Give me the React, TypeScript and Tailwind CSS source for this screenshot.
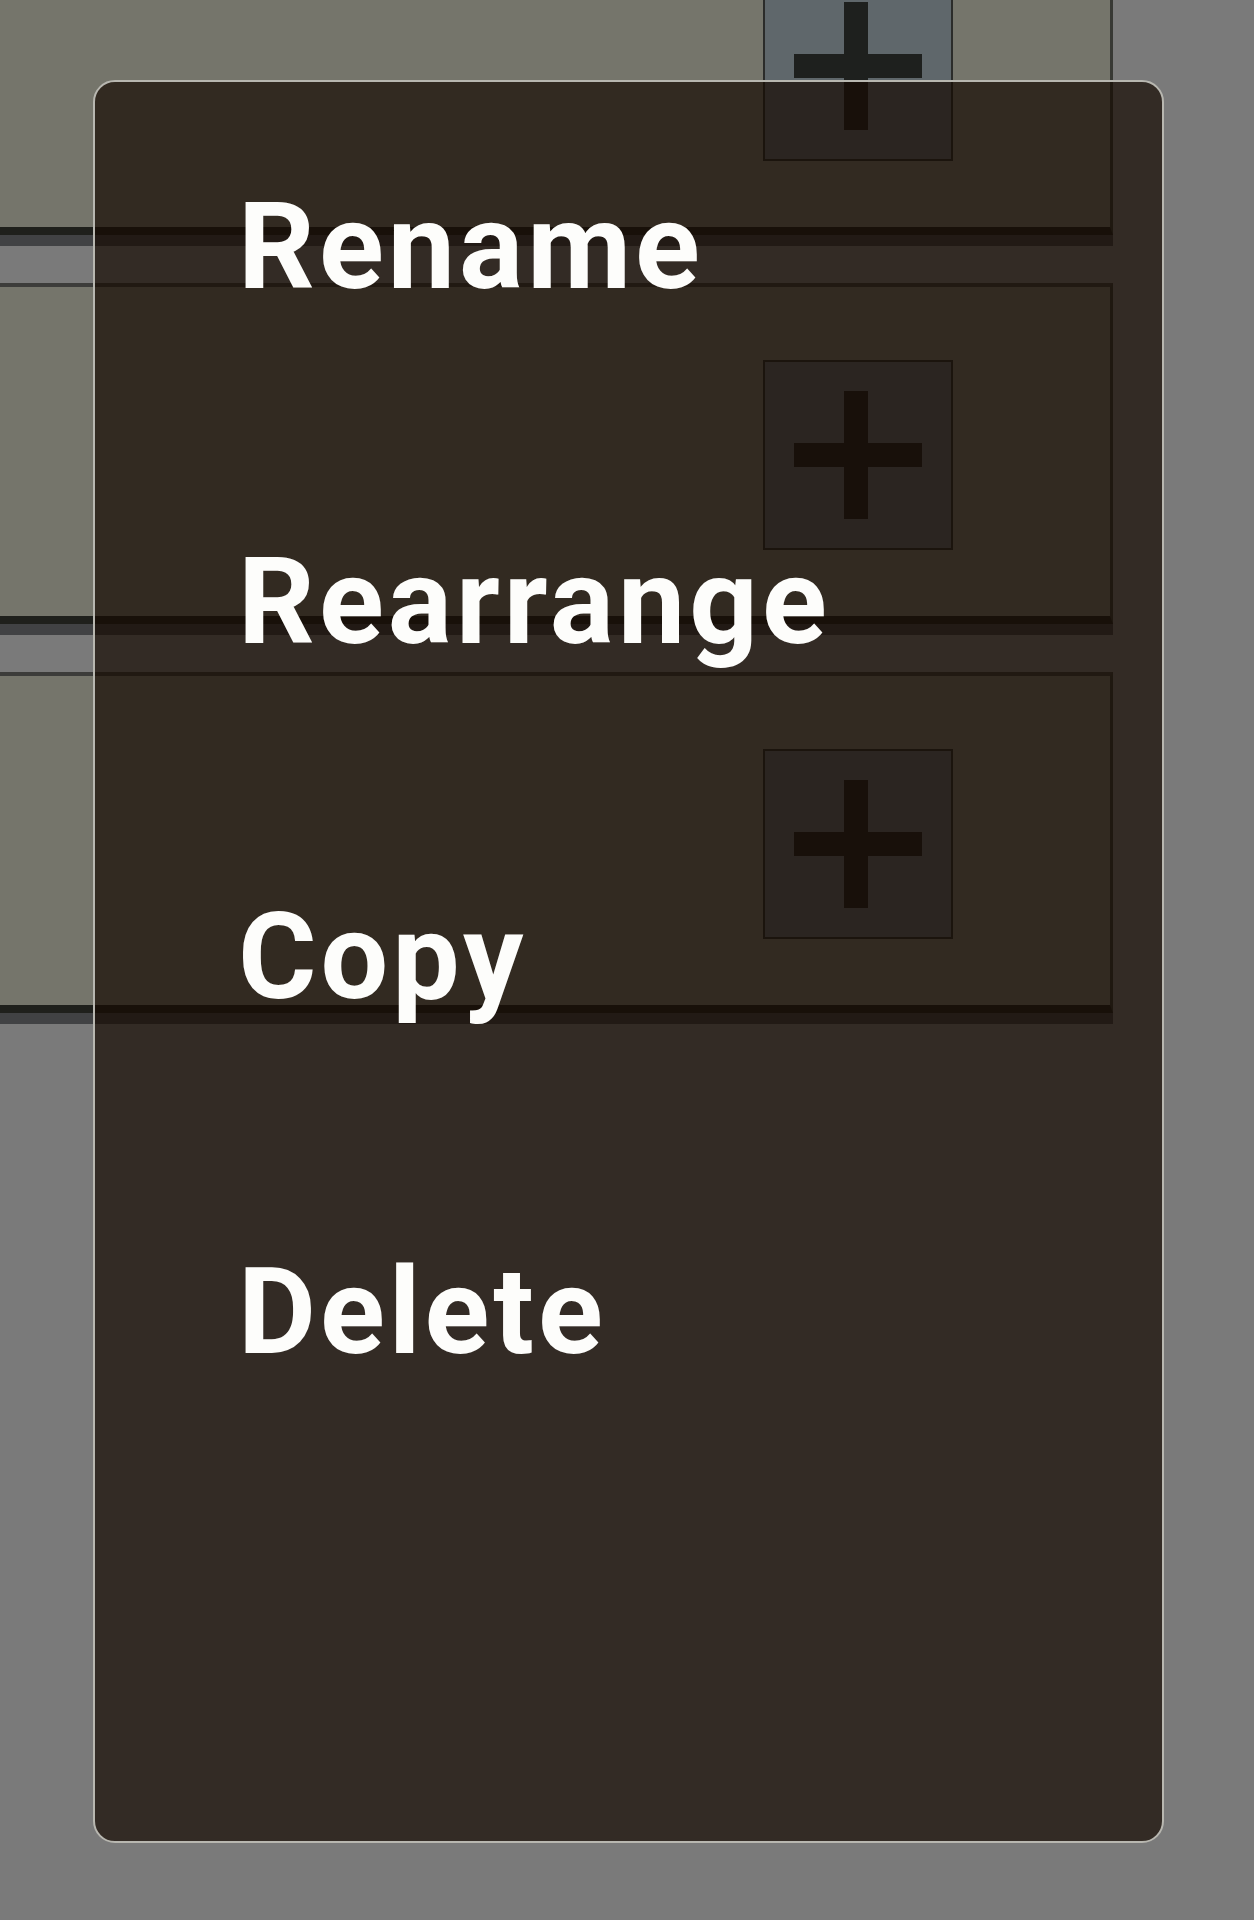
import React from 'react';

const cards = [0, 1, 2];
const items = ['Rename', 'Rearrange', 'Copy', 'Delete'];

function PlusButton() {
  return (
    <div className="w-[190px] h-[190px] bg-[#5f676b] border-2 border-[#2b2c2a] flex items-center justify-center">
      <svg width="128" height="128" viewBox="0 0 128 128" aria-hidden="true">
        <rect x="50" y="0" width="24" height="128" fill="#1e201e" />
        <rect x="0" y="52" width="128" height="24" fill="#1e201e" />
      </svg>
    </div>
  );
}

function Card() {
  return (
    <div className="w-[1113px]">
      <div className="h-[341px] bg-[#75756b] border-t-4 border-t-[#3c3c3a] border-r-[3px] border-r-[#383934] border-b-8 border-b-[#1f201c] flex justify-end pr-[157px] pt-[73px]">
        <PlusButton />
      </div>
      <div className="h-[11px] bg-[#414244]" />
    </div>
  );
}

export default function App() {
  return (
    <div className="relative w-[1254px] h-[1920px] overflow-hidden bg-[#7a7a7a] font-['Roboto',sans-serif]">
      <div className="flex flex-col gap-[37px] -mt-[106px]">
        {cards.map((c) => (
          <Card key={c} />
        ))}
      </div>

      <div className="absolute left-[93px] top-[80px] w-[1071px] h-[1763px] rounded-[22px] border-2 border-[#b8b7b0] bg-[#160a02]/70 pt-[105px] pl-[143px]">
        {items.map((label) => (
          <div key={label} className="h-[355px] text-[120px] leading-none font-bold tracking-[4px] text-[#fdfdfb]">
            {label}
          </div>
        ))}
      </div>
    </div>
  );
}
